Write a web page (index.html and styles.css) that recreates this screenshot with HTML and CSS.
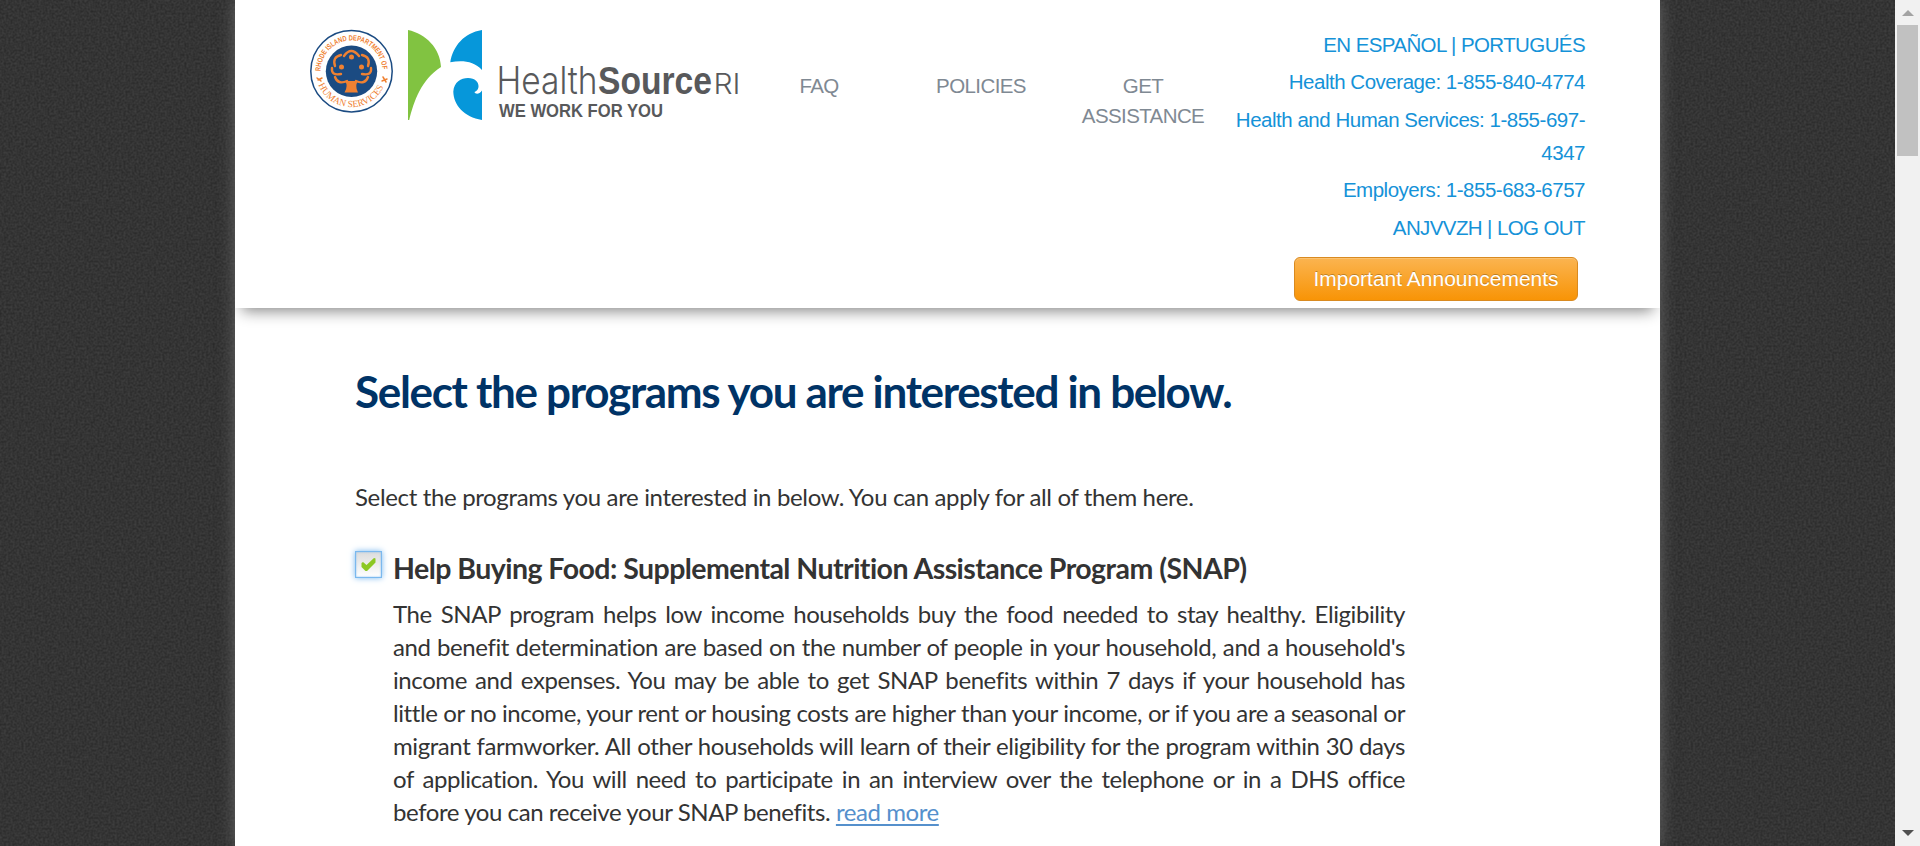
FILE: index.html
```html
<!DOCTYPE html>
<html lang="en">
<head>
<meta charset="utf-8">
<title>HealthSource RI</title>
<link rel="stylesheet" href="styles.css">
</head>
<body>
<div class="viewport">
  <svg class="fabric" width="1920" height="846" aria-hidden="true">
    <filter id="weave" x="0" y="0" width="100%" height="100%" color-interpolation-filters="sRGB">
      <feTurbulence type="fractalNoise" baseFrequency="0.46" numOctaves="1" seed="4"/>
      <feColorMatrix values="0.13 0 0 0 0.140  0.13 0 0 0 0.140  0.13 0 0 0 0.140  0 0 0 0 1"/>
    </filter>
    <rect width="1920" height="846" filter="url(#weave)"/>
  </svg>
  <div class="page">
    <header class="header">
      <svg class="logo" width="437" height="96" viewBox="308 28 437 96" role="img" aria-label="HealthSource RI">
        <defs>
          <path id="arc-top" d="M320.600 71.300 A30.900 30.900 0 0 1 382.400 71.300"/>
          <path id="arc-bottom" d="M317 80 A35.500 35.500 0 0 0 386 80"/>
        </defs>
        <circle cx="351.500" cy="71.300" r="40.700" fill="#fff" stroke="#1b4b82" stroke-width="1.500"/>
        <circle cx="351.500" cy="71.300" r="25.700" fill="#1b4b82"/>
        <text class="seal-top"><textPath href="#arc-top" textLength="95" lengthAdjust="spacingAndGlyphs">RHODE ISLAND DEPARTMENT OF</textPath></text>
        <text class="seal-bottom"><textPath href="#arc-bottom" startOffset="5" textLength="82">HUMAN SERVICES</textPath></text>
        <g fill="none" stroke="#ef8132" stroke-width="2.400" stroke-linecap="round">
          <path d="M344 56 Q351 46 359 56"/>
          <path d="M335 66 Q332 57 341 55"/>
          <path d="M362 55 Q371 57 368 66"/>
          <path d="M332 68 Q331 76 341 74"/>
          <path d="M371 68 Q372 76 362 74"/>
          <path d="M335 77 Q338 85 347 81"/>
          <path d="M368 77 Q365 85 356 81"/>
          <path d="M317 78 l4 3 m-3 -1 l4 -2 M382 81 l5 -2 m-4 -2 l3 5" stroke-width="1.500"/>
        </g>
        <g fill="#ef8132">
          <circle cx="351.500" cy="57" r="2.500"/>
          <circle cx="341.500" cy="67" r="2.500"/>
          <circle cx="361.500" cy="67" r="2.500"/>
          <path d="M345 81 H358 Q354.500 86 358 92.500 H344.500 Q348.500 86 345 81Z"/>
        </g>
        <path fill="#81c341" d="M408 30 C426 34 440 48 441 67 C421 80 414 101 409.200 120 H408Z"/>
        <path fill="#0697da" d="M482 30 V70 C474 61 462 60 450.300 62.300 C453 46 464 33 482 30Z"/>
        <path fill="#0697da" d="M482 90.500 V120 C464 117 453.500 105 453.300 91.500 C454 82 461 78 468 78 C475 78 479 82 478.500 87 C478 90 476.500 91 474.500 92 C475 94 479 95 482 90.500Z"/>
        <text class="brand-thin" x="496.500" y="93.700" textLength="101" lengthAdjust="spacingAndGlyphs">Health</text>
        <text class="brand-bold" x="598" y="93.700" textLength="114" lengthAdjust="spacingAndGlyphs">Source</text>
        <text class="brand-ri" x="713.500" y="93.700" textLength="27" lengthAdjust="spacingAndGlyphs">RI</text>
        <text class="brand-tag" x="499" y="116.700" textLength="164" lengthAdjust="spacingAndGlyphs">WE WORK FOR YOU</text>
      </svg>
      <nav class="nav">
        <a class="nav-item">FAQ</a>
        <a class="nav-item">POLICIES</a>
        <a class="nav-item">GET ASSISTANCE</a>
      </nav>
      <div class="contact">
        <p class="contact-line caps">EN ESPAÑOL | PORTUGUÉS</p>
        <p class="contact-line">Health Coverage: 1-855-840-4774</p>
        <p class="contact-line">Health and Human Services: 1-855-697-<br>4347</p>
        <p class="contact-line">Employers: 1-855-683-6757</p>
        <p class="contact-line caps">ANJVVZH | LOG OUT</p>
        <button class="announce">Important Announcements</button>
      </div>
    </header>
    <main class="content">
      <h1 class="title">Select the programs you are interested in below.</h1>
      <p class="intro">Select the programs you are interested in below. You can apply for all of them here.</p>
      <section class="program">
        <span class="checkbox">
          <svg width="15" height="14" viewBox="0 0 15 14"><path d="M0.500 5 L2 4 L5.500 7 L13 0 L14.500 0.500 V4.500 L6 13 H4.500 L0.500 9Z" fill="#8cc823"/></svg>
        </span>
        <div class="program-body">
          <h2 class="program-title">Help Buying Food: Supplemental Nutrition Assistance Program (SNAP)</h2>
          <p class="program-text">
            <span class="line">The SNAP program helps low income households buy the food needed to stay healthy. Eligibility</span>
            <span class="line">and benefit determination are based on the number of people in your household, and a household's</span>
            <span class="line">income and expenses. You may be able to get SNAP benefits within 7 days if your household has</span>
            <span class="line">little or no income, your rent or housing costs are higher than your income, or if you are a seasonal or</span>
            <span class="line">migrant farmworker. All other households will learn of their eligibility for the program within 30 days</span>
            <span class="line">of application. You will need to participate in an interview over the telephone or in a DHS office</span>
            <span class="line line-last">before you can receive your SNAP benefits. <a class="more">read more</a></span>
          </p>
        </div>
      </section>
    </main>
  </div>
  <div class="scrollbar">
    <span class="arrow-up"></span>
    <span class="thumb"></span>
    <span class="arrow-down"></span>
  </div>
</div>
</body>
</html>
```
FILE: styles.css
```css
* { box-sizing: border-box; }
body { margin: 0; overflow: hidden; }
h1, h2, p { margin: 0; }

.viewport {
  position: relative;
  z-index: 0;
  display: flex;
  justify-content: space-between;
  height: 846px;
  padding-left: 235px;
  overflow: hidden;
  background-color: #343434;
}
.fabric { position: absolute; inset: 0; z-index: -1; }
.page {
  width: 1425px;
  height: 846px;
  background: #fff;
  box-shadow: 0 0 15px #666;
}

.header {
  display: flex;
  height: 308px;
  padding: 28px 75px 0 73px;
  background: #fff;
  box-shadow: 0 10px 14px -7px rgba(0,0,0,.48);
  clip-path: inset(0 0 -30px 0);
  font-family: "Liberation Sans", Arial, sans-serif;
  font-size: 20.500px;
}
.logo { flex: none; margin-right: -7px; }
.seal-top { font: bold 7.500px "Liberation Sans", sans-serif; fill: #ef8132; }
.seal-bottom { font: 9.500px "Liberation Serif", serif; fill: #ef8132; }
.brand-thin { font: 300 38.500px Inter, sans-serif; fill: #58595b; }
.brand-bold { font: bold 39px "Liberation Sans", sans-serif; fill: #58595b; }
.brand-ri { font: 300 29px Inter, sans-serif; fill: #58595b; }
.brand-tag { font: bold 17.500px "Liberation Sans", sans-serif; fill: #58595b; }

.nav { display: flex; padding-top: 43px; }
.nav-item {
  width: 162px;
  padding: 0 16px;
  line-height: 30px;
  letter-spacing: -.6px;
  text-align: center;
  color: #7f8993;
}
.contact {
  flex: 1;
  display: flex;
  flex-direction: column;
  align-items: flex-end;
  text-align: right;
  white-space: nowrap;
}
.contact-line {
  margin-bottom: 4.400px;
  line-height: 33px;
  letter-spacing: -.48px;
  color: #1592d8;
}
.contact-line.caps { letter-spacing: -.6px; }
.announce {
  width: 284px;
  height: 44px;
  margin: 9px 7px 0 0;
  padding: 0;
  border: 1px solid #d98a20;
  border-radius: 6px;
  background: linear-gradient(#fbb450, #f89406);
  box-shadow: inset 0 1px 0 rgba(255,255,255,.2);
  font: 21px/30px "Liberation Sans", Arial, sans-serif;
  color: #fff;
  text-shadow: 0 -1px 0 rgba(0,0,0,.25);
}

.content {
  padding: 53px 0 0 120px;
  font-family: Lato, sans-serif;
  font-size: 24px;
  color: #333;
  white-space: nowrap;
}
.title {
  font-size: 44px;
  line-height: 60px;
  font-weight: 700;
  letter-spacing: -1.320px;
  color: #036;
}
.intro { margin-top: 59px; line-height: 33px; letter-spacing: -.35px; }
.program { display: flex; margin-top: 37px; }
.checkbox {
  display: flex;
  align-items: center;
  justify-content: center;
  flex: none;
  width: 27px;
  height: 27px;
  margin: 1px 11px 0 0;
  border: 1px solid #7ab8ee;
  background: linear-gradient(#dcdcdc, #fff);
  box-shadow: 0 0 6px #7ab8ee, inset 0 0 2px #7ab8ee;
}
.program-body { width: 1012px; }
.program-title {
  font-size: 28.500px;
  line-height: 36px;
  font-weight: 700;
  letter-spacing: -.54px;
}
.program-text { margin-top: 11px; line-height: 33px; letter-spacing: -.42px; }
.line { display: block; text-align-last: justify; }
.line-last { text-align-last: left; }
.more { color: #5590cc; text-decoration: underline; text-underline-offset: 3px; text-decoration-thickness: 2px; }

.scrollbar {
  display: flex;
  flex-direction: column;
  align-items: center;
  width: 25px;
  background: #f1f1f1;
}
.arrow-up, .arrow-down { border: 6px solid transparent; border-top-width: 0; border-bottom: 6px solid #a3a3a3; margin-top: 10px; }
.thumb { width: 21px; height: 131px; margin-top: 9px; background: #c1c1c1; }
.arrow-down { margin-top: auto; margin-bottom: 10px; border-bottom-width: 0; border-top: 6px solid #505050; }
```
